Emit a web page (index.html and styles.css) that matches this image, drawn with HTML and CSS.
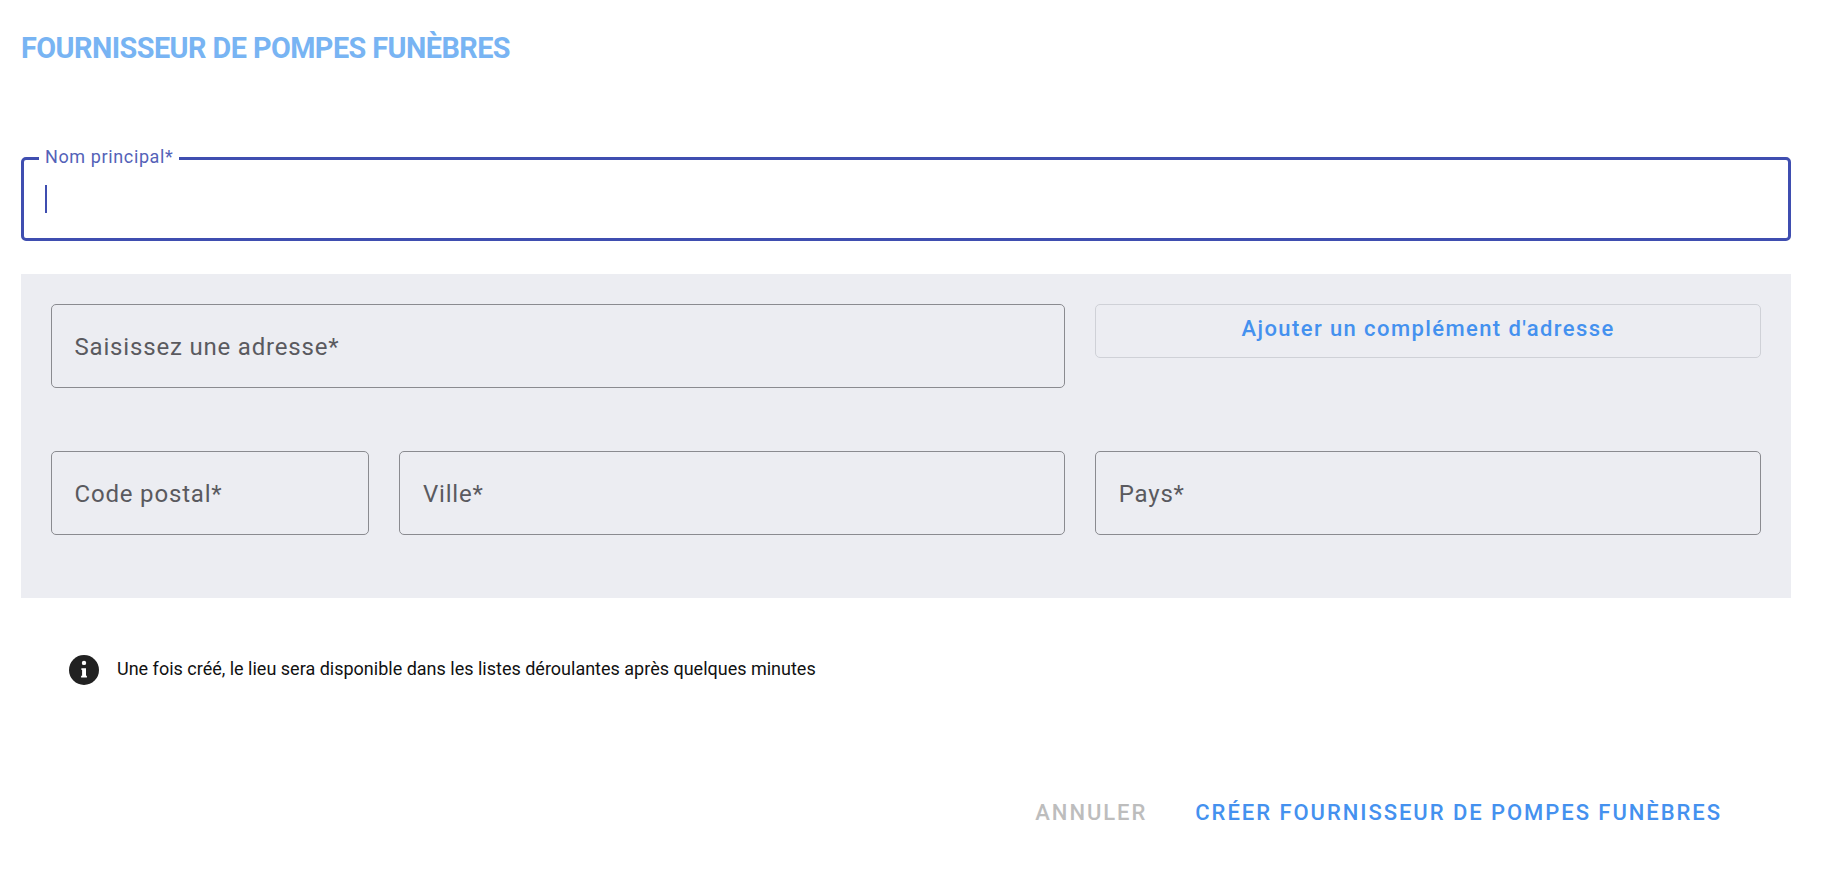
FILE: index.html
```html
<!DOCTYPE html>
<html lang="fr">
<head>
<meta charset="utf-8">
<title>Fournisseur de pompes funèbres</title>
<link rel="stylesheet" href="styles.css">
</head>
<body>
<main class="page">
  <h1 class="title">FOURNISSEUR DE POMPES FUNÈBRES</h1>
  <div class="main-field">
    <span class="main-label">Nom principal*</span>
    <span class="caret"></span>
  </div>
  <section class="address">
    <div class="field span-2"><span class="placeholder">Saisissez une adresse*</span></div>
    <button class="add-btn" type="button">Ajouter un complément d'adresse</button>
    <div class="field"><span class="placeholder">Code postal*</span></div>
    <div class="field"><span class="placeholder">Ville*</span></div>
    <div class="field"><span class="placeholder">Pays*</span></div>
  </section>
  <div class="info">
    <svg class="info-icon" viewBox="0 0 30 30" aria-hidden="true">
      <circle cx="15" cy="15" r="15" fill="#212121"/>
      <circle cx="15" cy="7.9" r="2.2" fill="#fff"/>
      <path d="M12.4 13.2h4.6v7.6h.9v1.7h-5.8v-1.7h1v-5.9h-.7z" fill="#fff"/>
    </svg>
    <p class="info-text">Une fois créé, le lieu sera disponible dans les listes déroulantes après quelques minutes</p>
  </div>
  <div class="actions">
    <button class="action cancel" type="button">ANNULER</button>
    <button class="action create" type="button">CRÉER FOURNISSEUR DE POMPES FUNÈBRES</button>
  </div>
</main>
</body>
</html>
```
FILE: styles.css
```css
* { box-sizing: border-box; }
html, body { margin: 0; height: 100%; background: #fff; }
body { font-family: Roboto, "Liberation Sans", sans-serif; overflow: hidden; }
.page { padding: 30px 45px 0 21px; }
.title {
  margin: 0;
  height: 36px;
  font-size: 28.8px;
  line-height: 37px;
  font-weight: 700;
  letter-spacing: -0.55px;
  color: #78b4f3;
}
.main-field {
  position: relative;
  margin-top: 91px;
  height: 84px;
  border: 3px solid #3f4eb0;
  border-radius: 5px;
  display: flex;
  align-items: center;
  padding-left: 21px;
}
.main-label {
  position: absolute;
  left: 15px;
  top: -14px;
  padding: 0 6px;
  background: #fff;
  color: #5462b8;
  font-size: 18px;
  line-height: 22px;
  letter-spacing: 0.62px;
}
.caret { width: 2px; height: 28px; background: #3f4eb0; }
.address {
  margin-top: 33px;
  height: 324px;
  padding: 30px;
  background: #ecedf2;
  display: grid;
  grid-template-columns: 318fr 665fr 665fr;
  grid-template-rows: 84px 84px;
  column-gap: 30px;
  row-gap: 63px;
  align-items: start;
}
.field {
  height: 84px;
  border: 1px solid #8a8b90;
  border-radius: 5px;
  display: flex;
  align-items: center;
  padding: 1px 0 0 22.5px;
}
.span-2 { grid-column: span 2; }
.placeholder {
  color: #5a5a5f;
  font-size: 24px;
  letter-spacing: 0.82px;
}
.add-btn {
  height: 54px;
  border: 1px solid #cfd1d7;
  border-radius: 5px;
  background: transparent;
  color: #4491ef;
  font-family: inherit;
  font-size: 22px;
  font-weight: 500;
  letter-spacing: 1.4px;
  padding: 0 0 5px;
}
.info {
  margin-top: 57px;
  margin-left: 48px;
  display: flex;
  align-items: center;
  gap: 18px;
}
.info-icon { width: 30px; height: 30px; flex: none; }
.info-text {
  margin: 0;
  padding-bottom: 2px;
  color: #111;
  font-size: 18px;
  line-height: 28px;
}
.actions {
  margin-top: 114px;
  padding-right: 69px;
  display: flex;
  justify-content: flex-end;
  gap: 48px;
}
.action {
  border: 0;
  padding: 0;
  background: transparent;
  font-family: inherit;
  font-size: 22px;
  font-weight: 500;
  line-height: 28px;
  letter-spacing: 1.95px;
}
.cancel { color: #bdbdbd; }
.create { color: #4491ef; }
```
